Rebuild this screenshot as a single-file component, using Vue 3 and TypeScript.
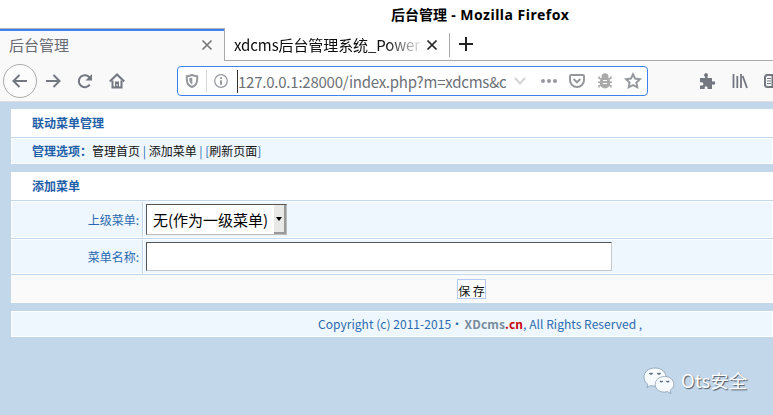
<script setup lang="ts">
import { ref } from 'vue'

interface PageLink {
  label: string
}

const manageLinks: PageLink[] = [{ label: '管理首页' }, { label: '添加菜单' }]
const parentMenu = ref<string>('无(作为一级菜单)')
const menuName = ref<string>('')
</script>

<template>
  <div class="window">
    <header class="titlebar">
      <span>后台管理<span class="app-name"> - Mozilla Firefox</span></span>
    </header>

    <div class="tabs">
      <div class="tab active">
        <span class="tab-title">后台管理</span>
        <svg class="close" viewBox="0 0 12 12"><path d="M1.500 1.500l9 9M10.500 1.500l-9 9" /></svg>
      </div>
      <div class="tab">
        <span class="tab-title fade">xdcms后台管理系统_Power</span>
        <svg class="close" viewBox="0 0 12 12"><path d="M1.500 1.500l9 9M10.500 1.500l-9 9" /></svg>
      </div>
      <div class="new-tab">
        <svg viewBox="0 0 14 14"><path d="M7 0v14M0 7h14" /></svg>
      </div>
    </div>

    <nav class="toolbar">
      <button class="back" aria-label="Back">
        <svg class="i16" viewBox="0 0 16 16"><path d="M15 8H2M7.500 2L1.500 8l6 6" /></svg>
      </button>
      <svg class="i16 forward" viewBox="0 0 16 16"><path d="M1 8h13M8.500 2l6 6-6 6" /></svg>
      <svg class="i16 reload" viewBox="0 0 16 16">
        <path d="M12.700 11.700a6 6 0 1 1 .2-6.700" /><path class="solid" d="M15 1v6.500H8.500z" />
      </svg>
      <svg class="i16 home" viewBox="0 0 16 16">
        <path d="M.8 8.500L8 1.500l7.200 7" /><path d="M3.500 7.500v7h9v-7" /><path class="solid" d="M6 8.500h4V15H6z" />
        <path class="knob" d="M8 11v2" />
      </svg>

      <div class="urlbar">
        <svg class="i14 shield" viewBox="0 0 14 14">
          <path d="M7 1C5 1.800 3.500 2 1.800 2.200v3C1.800 9 3.600 11.800 7 13c3.400-1.200 5.200-4 5.200-7.800v-3C10.500 2 9 1.800 7 1z" />
          <path class="solid" d="M7.300 3.500v7.200C5 9.300 4.200 7.500 4.200 4.300z" />
        </svg>
        <i class="divider"></i>
        <svg class="i14 info" viewBox="0 0 14 14">
          <circle cx="7" cy="7" r="6.300" /><path class="mark" d="M7 6.200v4.600M7 3.300v1.800" />
        </svg>
        <i class="caret"></i>
        <span class="url">127.0.0.1:28000/index.php?m=xdcms&amp;c</span>
        <svg class="chevron" viewBox="0 0 12 8"><path d="M1 1l5 5.500L11 1" /></svg>
        <svg class="dots" viewBox="0 0 16 4">
          <circle cx="2" cy="2" r="2" /><circle cx="8" cy="2" r="2" /><circle cx="14" cy="2" r="2" />
        </svg>
        <svg class="pocket" viewBox="0 0 16 14">
          <path d="M2.200 1h11.600q1.200 0 1.200 1.200V6a7 7 0 0 1-14 0V2.200Q1 1 2.200 1z" /><path d="M4.600 5L8 8.300 11.400 5" />
        </svg>
        <svg class="bug" viewBox="0 0 16 16">
          <path d="M2 3.500v1.500l3 1.500M14 3.500v1.500l-3 1.500M1 9.300h14M2 14.500V13l3-1.500M14 14.500V13l-3-1.500" />
          <ellipse cx="8" cy="9.700" rx="5.300" ry="5.900" /><circle cx="8" cy="3.800" r="3.500" />
          <path class="cut" d="M6 7.500h4M6 10.500h4" />
        </svg>
        <svg class="star" viewBox="0 0 16 16">
          <path d="M8 1.300l2.100 4.300 4.800.7-3.500 3.300.9 4.700L8 12.100l-4.300 2.200.9-4.700-3.500-3.300 4.800-.7z" />
        </svg>
      </div>

      <svg class="i16 puzzle" viewBox="0 0 16 16">
        <path d="M5 5V3.500H4.600a2 2 0 1 1 2.900 0V5H12v3.500h.8a1.700 1.700 0 1 1 0 3H12V16H7.500v-1.800a1.500 1.500 0 0 0-2.800 0V16H0v-3.500h1.800a1.600 1.600 0 0 0 0-3.200H0V5z" />
      </svg>
      <svg class="i16 library" viewBox="0 0 16 16"><path d="M1.500 1v14M5.300 3v12M9 1v14M10.700 3l4.300 12" /></svg>
      <svg class="i16 sidebar" viewBox="0 0 16 16">
        <rect x="1" y="2" width="16" height="12" rx="2.500" /><path d="M8.500 2v12" /><path class="thin" d="M3 5.500h4M3 8h4M3 10.500h4" />
      </svg>
    </nav>

    <main class="page">
      <section class="panel">
        <h2>联动菜单管理</h2>
        <div class="options">
          <b>管理选项：</b><template v-for="link in manageLinks" :key="link.label"><a>{{ link.label }}</a> | </template>[<a>刷新页面</a>]
        </div>
      </section>

      <form class="panel editor" @submit.prevent>
        <h2>添加菜单</h2>
        <div class="row parent">
          <label>上级菜单:</label>
          <div class="cell">
            <div class="select">
              <span>{{ parentMenu }}</span>
              <i class="drop"></i>
            </div>
          </div>
        </div>
        <div class="row name">
          <label>菜单名称:</label>
          <div class="cell"><input v-model="menuName" type="text" /></div>
        </div>
        <div class="actions"><button class="save" type="submit">保 存</button></div>
      </form>

      <footer class="copyright">
        <span>Copyright (c) 2011-2015<span class="dot">・</span><b>XDcms<em>.cn</em></b>, All Rights Reserved ,</span>
      </footer>

      <div class="watermark">
        <svg viewBox="0 0 32 28">
          <g class="bubble">
            <path d="M12 1C5.500 1 1 5 1 10.300c0 3 1.600 5.500 4 7.200L4 20.500l4-2c6 2 15-1 15-8.200C23 5 18.500 1 12 1z" />
            <path d="M21.500 9.500c-5.300 0-9.300 3.400-9.300 7.900 0 5.500 6 9 12.200 7.200l3.600 2-1-3.200c2.400-1.600 3.800-3.600 3.800-6 0-4.500-4-7.900-9.300-7.900z" />
          </g>
          <path class="eyes" d="M6.500 6q1.500 2 3 0M14.500 6q1.500 2 3 0M17 13.800q1.300 2 2.600 0M23.500 13.800q1.300 2 2.600 0" />
        </svg>
        <span>Ots安全</span>
      </div>
    </main>
  </div>
</template>

<style>
body {
  margin: 0;
  overflow: hidden;
}
</style>

<style scoped>
* {
  box-sizing: border-box;
}
.window {
  width: 773px;
  height: 415px;
  overflow: hidden;
  background: #fff;
  font-family: "Noto Sans CJK SC", sans-serif;
}
svg {
  display: block;
  flex: none;
  fill: none;
  stroke: #737780;
  stroke-width: 2;
  overflow: visible;
}
.titlebar {
  height: 28px;
  padding: 1px 0 0 391px;
  font: bold 14px/28px "Noto Sans", "Noto Sans CJK SC", sans-serif;
  color: #000;
  white-space: nowrap;
}
.app-name {
  letter-spacing: 0.5px;
}
.tabs {
  display: flex;
  height: 33px;
}
.tab {
  display: flex;
  align-items: center;
  width: 230px;
  padding: 1px 15px 0 9px;
  border-bottom: 1px solid #aaa;
  font-size: 15px;
  color: #0c0c0d;
}
.tab.active {
  width: 225px;
  padding: 0 11px 0 9px;
  border-top: 1px solid #b1b1b1;
  border-right: 1px solid #aaa;
  border-bottom: 0;
  box-shadow: inset 0 2px #3b82ef;
  background: #f9f9fa;
  color: #686b71;
}
.tab-title {
  flex: 1;
  line-height: 24px;
  white-space: nowrap;
  overflow: hidden;
}
.fade {
  flex: none;
  width: 188px;
  margin-right: 4px;
  letter-spacing: -0.1px;
  mask-image: linear-gradient(to right, #000 152px, transparent 190px);
}
.close {
  width: 12px;
  height: 12px;
  stroke: #222;
  stroke-width: 1.700;
}
.active .close {
  stroke: #777;
}
.new-tab {
  flex: 1;
  display: flex;
  align-items: center;
  padding-left: 4px;
  border-bottom: 1px solid #aaa;
}
.new-tab::before {
  content: "";
  width: 1px;
  height: 24px;
  margin: 1px 9px 0 -10px;
  background: #aaa;
}
.new-tab svg {
  width: 14px;
  height: 14px;
  stroke: #222;
}
.toolbar {
  display: flex;
  align-items: center;
  height: 41px;
  padding-left: 3px;
  background: #f9f9fa;
  border-bottom: 1px solid #ddd;
}
.i16 {
  width: 16px;
  height: 16px;
}
.i14 {
  width: 14px;
  height: 14px;
}
.solid {
  fill: #737780;
  stroke: none;
}
.back {
  flex: none;
  display: flex;
  align-items: center;
  justify-content: center;
  width: 34px;
  height: 34px;
  padding: 0;
  border: 1px solid #aaa;
  border-radius: 50%;
  background: #fcfcfc;
}
.forward {
  margin-left: 8px;
}
.reload {
  margin-left: 16px;
}
.home {
  margin-left: 16px;
}
.home .knob {
  stroke: #fff;
  stroke-width: 1;
}
.urlbar {
  flex: none;
  display: flex;
  align-items: center;
  width: 471px;
  height: 30px;
  margin-left: 52px;
  padding-left: 7px;
  border: 1px solid #3b82ef;
  border-radius: 4px;
  background: #fff;
}
.urlbar svg {
  stroke: #95989d;
}
.urlbar .solid {
  fill: #95989d;
}
.urlbar .info {
  stroke-width: 1.200;
}
.info .mark {
  stroke-width: 1.900;
}
.divider {
  flex: none;
  width: 1px;
  height: 22px;
  margin: 0 7px;
  background: #d7d7db;
}
.caret {
  flex: none;
  width: 1px;
  height: 23px;
  margin-left: 9px;
  background: #333;
}
.url {
  flex: none;
  width: 270px;
  font-size: 15px;
  letter-spacing: -0.23px;
  line-height: 24px;
  padding-top: 1px;
  white-space: nowrap;
  color: #6c7077;
}
.chevron {
  width: 12px;
  height: 8px;
  margin-left: 6px;
}
.urlbar .chevron {
  stroke: #d4d4d6;
}
.urlbar .dots {
  width: 16px;
  height: 4px;
  margin-left: 15px;
  fill: #95989d;
  stroke: none;
}
.pocket {
  width: 16px;
  height: 14px;
  margin-left: 12px;
}
.urlbar .bug {
  width: 16px;
  height: 16px;
  margin-left: 12px;
  stroke: #aaa;
  stroke-width: 1.600;
}
.bug ellipse,
.bug circle {
  fill: #aaa;
  stroke: none;
}
.bug .cut {
  stroke: #fff;
  stroke-width: 1;
}
.star {
  width: 16px;
  height: 16px;
  margin-left: 12px;
}
.puzzle {
  margin-left: 52px;
  fill: #737780;
  stroke: none;
}
.library {
  margin-left: 16px;
  stroke-width: 1.800;
}
.sidebar {
  margin-left: 16px;
}
.thin {
  stroke-width: 1;
}
.page {
  position: relative;
  height: 313px;
  padding: 7px 0 0 11px;
  background: #c3d7eb;
  color: #2a6bb0;
  font-size: 12px;
}
.panel {
  margin: 0 0 8px;
  background: #fff;
}
h2 {
  margin: 0;
  height: 29px;
  padding-left: 21px;
  border-bottom: 1px solid #c3d7eb;
  font-size: 12px;
  line-height: 27px;
  font-weight: bold;
  color: #1e60a8;
}
.options {
  height: 26px;
  padding-left: 20px;
  border: 1px solid #fff;
  background: #eef6fe;
  line-height: 23px;
  white-space: nowrap;
}
.options b {
  display: inline-block;
  width: 60px;
  color: #1e60a8;
}
.options a {
  color: #111;
}
.row {
  display: grid;
  grid-template-columns: 132px 1fr;
  height: 38px;
  border-bottom: 1px solid #c3d7eb;
}
.row.name {
  height: 36px;
}
.row label {
  display: flex;
  align-items: center;
  justify-content: flex-end;
  padding-right: 3px;
  border: 1px solid #fff;
  border-right: 1px solid #c3d7eb;
  background: #eef6fe;
}
.cell {
  display: flex;
  align-items: center;
  padding-left: 2px;
  border: 1px solid #fff;
  background: #eef6fe;
}
.select {
  display: flex;
  justify-content: space-between;
  width: 141px;
  height: 31px;
  padding-left: 6px;
  border: 1px solid #bbb;
  border-top-color: #555;
  border-left-color: #555;
  background: #fff;
  color: #000;
  font-size: 15px;
  line-height: 29px;
  white-space: nowrap;
}
.drop {
  display: flex;
  align-items: center;
  justify-content: center;
  width: 12px;
  border: solid #999;
  border-width: 0 2px 2px 0;
  background: #e8e8e7;
}
.drop::before {
  content: "";
  border: 3px solid transparent;
  border-top: 4px solid #000;
  border-bottom: 0;
}
input {
  width: 466px;
  height: 29px;
  padding: 0 4px;
  border: 1px solid #c8c8c8;
  border-top-color: #555;
  border-left-color: #555;
  background: #fff;
  outline: 0;
}
.actions {
  height: 28px;
  padding: 4px 0 0 446px;
  border-bottom: 1px solid #fff;
  background: #fafafa;
}
.save {
  display: block;
  width: 29px;
  height: 20px;
  padding: 3px 0 0;
  border: 1px solid #b5c9f5;
  background: #fff;
  color: #111;
  font: 12px/16px "Noto Sans CJK SC", sans-serif;
  white-space: nowrap;
}
.copyright {
  height: 26px;
  padding-left: 306px;
  border: 1px solid #fff;
  background: #eef6fe;
  line-height: 23px;
  letter-spacing: 0.04px;
  white-space: nowrap;
}
.copyright .dot {
  letter-spacing: 1.5px;
}
.copyright b {
  color: #778c9c;
  letter-spacing: 0.1px;
}
.copyright em {
  color: #c8000b;
  font-style: normal;
}
.watermark {
  position: absolute;
  left: 643px;
  top: 265px;
  display: flex;
  gap: 6px;
  color: #fff;
  font-size: 18.500px;
  line-height: 26px;
  white-space: nowrap;
  text-shadow: 1px 1px 1px #4b5865;
}
.watermark svg {
  width: 32px;
  height: 28px;
}
.bubble path {
  fill: #f8fbfd;
  stroke: #7e92a7;
  stroke-width: 0.700;
}
.eyes {
  stroke: #52677c;
  stroke-width: 1.300;
}
</style>
